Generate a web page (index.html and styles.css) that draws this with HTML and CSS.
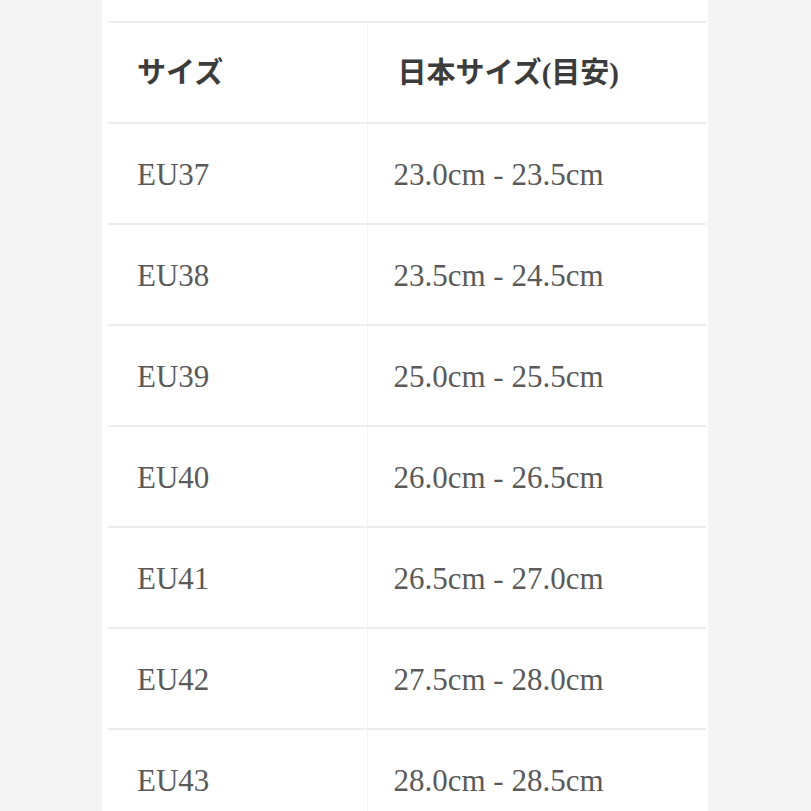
FILE: index.html
```html
<!DOCTYPE html>
<html lang="ja">
<head>
<meta charset="utf-8">
<title>サイズ表</title>
<link rel="stylesheet" href="styles.css">
</head>
<body>
<div class="panel">
  <table class="size-table">
    <thead>
      <tr><th class="c1">サイズ</th><th class="c2">日本サイズ(目安)</th></tr>
    </thead>
    <tbody>
      <tr><td class="c1">EU37</td><td class="c2">23.0cm - 23.5cm</td></tr>
      <tr><td class="c1">EU38</td><td class="c2">23.5cm - 24.5cm</td></tr>
      <tr><td class="c1">EU39</td><td class="c2">25.0cm - 25.5cm</td></tr>
      <tr><td class="c1">EU40</td><td class="c2">26.0cm - 26.5cm</td></tr>
      <tr><td class="c1">EU41</td><td class="c2">26.5cm - 27.0cm</td></tr>
      <tr><td class="c1">EU42</td><td class="c2">27.5cm - 28.0cm</td></tr>
      <tr><td class="c1">EU43</td><td class="c2">28.0cm - 28.5cm</td></tr>
    </tbody>
  </table>
</div>
</body>
</html>
```
FILE: styles.css
```css
html, body {
  margin: 0;
  padding: 0;
  height: 100%;
  overflow: hidden;
  background: #f4f4f4;
}
.panel {
  width: 600px;
  margin-left: 102px;
  min-height: 100%;
  background: #ffffff;
  padding: 21px 0 0 6px;
  box-sizing: content-box;
}
.size-table {
  width: 598px;
  border-collapse: collapse;
  table-layout: fixed;
  font-family: "Liberation Serif", "Noto Sans CJK JP", serif;
}
.size-table th, .size-table td {
  height: 99px;
  padding: 0;
  text-align: left;
  vertical-align: middle;
  border-top: 2px solid #ededed;
  box-sizing: border-box;
}
.size-table tr { height: 101px; }
.size-table .c1 {
  width: 259px;
  padding-left: 29px;
  border-right: 1px solid #f3f3f3;
}
.size-table .c2 {
  padding-left: 26px;
}
.size-table th {
  font-size: 29px;
  font-weight: 700;
  color: #3c3c3c;
  padding-bottom: 5px;
}
.size-table th.c2 { padding-left: 30px; }
.size-table td {
  font-size: 31px;
  font-weight: 400;
  color: #5a5a5a;
  padding-top: 2px;
}
```
